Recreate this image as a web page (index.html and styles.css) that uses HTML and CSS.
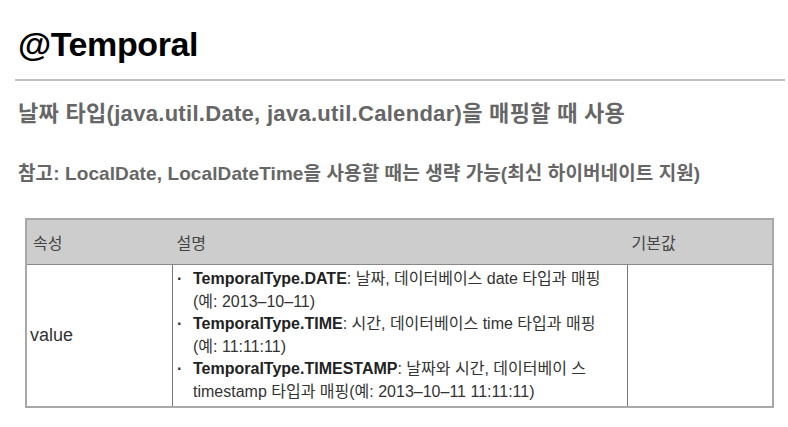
FILE: index.html
```html
<!DOCTYPE html>
<html lang="ko">
<head>
<meta charset="utf-8">
<link rel="stylesheet" href="styles.css">
</head>
<body>
<div class="page">
  <h1 class="title">@Temporal</h1>
  <hr class="rule">
  <p class="sub">날짜 타입(java.util.Date, java.util.Calendar)을 매핑할 때 사용</p>
  <p class="note">참고: LocalDate, LocalDateTime을 사용할 때는 생략 가능(최신 하이버네이트 지원)</p>
  <table class="attrs">
    <thead>
      <tr>
        <th class="c1">속성</th>
        <th class="c2">설명</th>
        <th class="c3">기본값</th>
      </tr>
    </thead>
    <tbody>
      <tr>
        <td class="c1">value</td>
        <td class="c2">
          <ul class="list">
            <li><b>TemporalType.DATE</b>: 날짜, 데이터베이스 date 타입과 매핑<br>(예: 2013–10–11)</li>
            <li><b>TemporalType.TIME</b>: 시간, 데이터베이스 time 타입과 매핑<br>(예: 11:11:11)</li>
            <li><b>TemporalType.TIMESTAMP</b>: 날짜와 시간, 데이터베이 스<br>timestamp 타입과 매핑(예: 2013–10–11 11:11:11)</li>
          </ul>
        </td>
        <td class="c3"></td>
      </tr>
    </tbody>
  </table>
</div>
</body>
</html>
```
FILE: styles.css
```css
html, body {
  margin: 0;
  padding: 0;
  background: #fff;
}
body {
  font-family: "Liberation Sans", "Noto Sans CJK KR", sans-serif;
  color: #222;
}
.page {
  padding: 24px 0 0 15px;
}
.title {
  margin: 0 0 0 3px;
  font-size: 34px;
  line-height: 40px;
  font-weight: bold;
  color: #000;
  letter-spacing: -0.4px;
}
.rule {
  margin: 15px 3px 0 0;
  border: 0;
  border-top: 2px solid #c0c0c0;
  height: 0;
}
.sub {
  margin: 19px 0 0 3px;
  font-size: 22px;
  line-height: 28px;
  font-weight: bold;
  color: #666;
  letter-spacing: 0.3px;
}
.note {
  margin: 33px 0 0 3px;
  font-size: 19px;
  line-height: 26px;
  font-weight: bold;
  color: #666;
  letter-spacing: 0.1px;
}
.attrs {
  margin: 31px 0 0 10px;
  width: 749px;
  border-collapse: collapse;
  border: 2px solid #a8a8a8;
  font-size: 16px;
  color: #333;
}
.attrs th {
  background: #cdcdcd;
  font-weight: normal;
  text-align: left;
  height: 44px;
  padding: 0 0 0 6px;
  color: #444;
  border-bottom: 1px solid #888;
}
.attrs th.c2 { padding-left: 4px; }
.attrs th.c3 { padding-left: 4px; }
.attrs td {
  vertical-align: middle;
  padding: 0;
  border-left: 1px solid #777;
}
.attrs td.c1 {
  width: 142px;
  padding-left: 3px;
  font-size: 18px;
  border-left: 0;
}
.attrs td.c3 { width: 144px; }
.list {
  list-style: none;
  margin: 0;
  padding: 3px 0 3px 20px;
  line-height: 22.5px;
}
.list li {
  position: relative;
}
.list li::before {
  content: "·";
  position: absolute;
  left: -16px;
  font-weight: bold;
}
.list b { color: #222; }
```
